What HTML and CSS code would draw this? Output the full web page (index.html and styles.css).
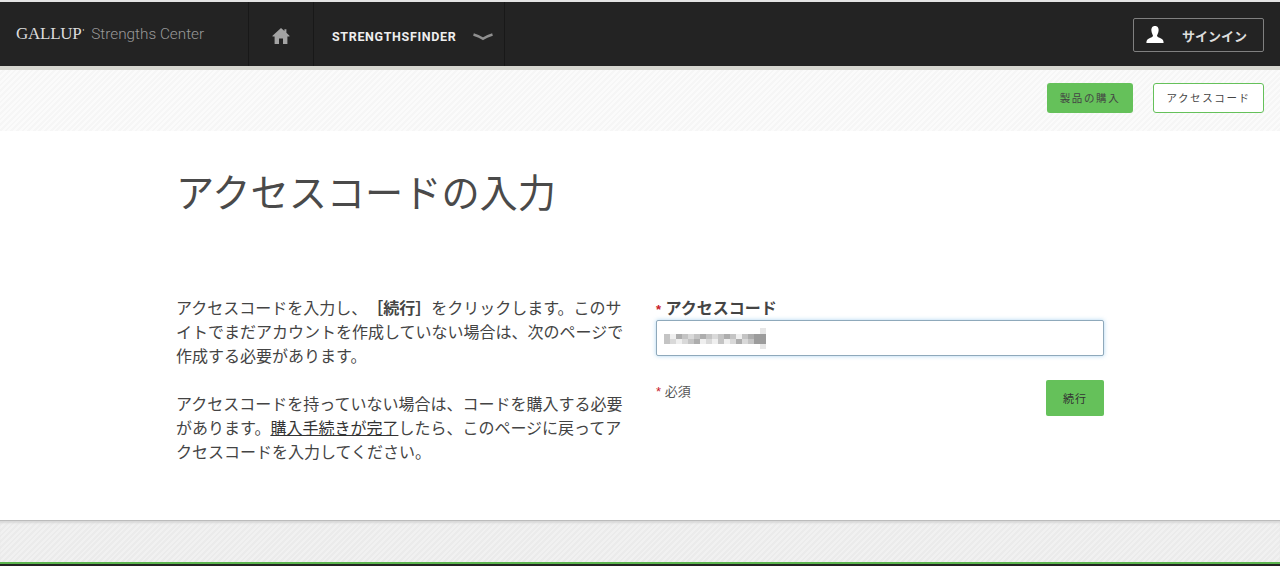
FILE: index.html
```html
<!DOCTYPE html>
<html lang="ja">
<head>
<meta charset="utf-8">
<title>アクセスコードの入力</title>
<link rel="stylesheet" href="styles.css">
</head>
<body>
<header class="topbar">
  <div class="brand"><span class="gallup">GALLUP</span><span class="tm">'</span><span class="center">Strengths Center</span></div>
  <a class="nav-home" aria-label="home">
    <svg width="18" height="18" viewBox="0 0 18 18"><path fill="#a3a3a3" d="M9 1 L12.4 4 V2.2 H14.4 V5.8 L17.5 8.7 V9.6 H15.4 V17 H11 V11.5 H7 V17 H2.6 V9.6 H.5 V8.7 Z"/></svg>
  </a>
  <a class="nav-menu"><span>STRENGTHSFINDER</span>
    <svg class="chev" width="20" height="8" viewBox="0 0 20 8"><path fill="none" stroke="#8f8f8f" stroke-width="2.4" d="M0.5 1.5 Q7 3.5 10 5.8 Q13 3.5 19.5 1.5"/></svg>
  </a>
  <a class="signin">
    <svg width="18" height="18" viewBox="0 0 18 18"><path fill="#fff" d="M9 0 C12 0 12.8 2.4 12.6 4.6 C12.4 7 11.4 8.6 11 9.6 C11 11 13 11.6 15 12.4 C17 13.2 17.6 14.4 17.6 17 H.4 C.4 14.4 1 13.2 3 12.4 C5 11.6 7 11 7 9.6 C6.6 8.6 5.6 7 5.4 4.6 C5.2 2.4 6 0 9 0 Z"/></svg>
    <span>サインイン</span>
  </a>
</header>
<div class="subbar">
  <a class="btn btn-green">製品の購入</a>
  <a class="btn btn-outline">アクセスコード</a>
</div>
<main class="content">
  <h1>アクセスコードの入力</h1>
  <div class="columns">
    <div class="intro">
      <p>アクセスコードを入力し、<b>［続行］</b>をクリックします。このサイトでまだアカウントを作成していない場合は、次のページで作成する必要があります。</p>
      <p>アクセスコードを持っていない場合は、コードを購入する必要があります。<a class="link">購入手続きが完了</a>したら、このページに戻ってアクセスコードを入力してください。</p>
    </div>
    <form class="form">
      <label class="field-label"><span class="star">*</span> アクセスコード</label>
      <div class="input">
        <svg class="masked" width="102" height="21" viewBox="0 0 102 21" shape-rendering="crispEdges">
          <path fill="#d9d9d9" d="M0 6h96v5H0zM0 11h96v5H0z"/>
          <path fill="#efefef" d="M6 6h6v5H6zM36 11h6v5h-6zM60 11h6v5h-6zM72 6h6v5h-6zM48 11h6v5h-6zM12 11h6v5h-6z"/>
          <path fill="#c4c4c4" d="M0 6h6v5H0zM18 6h6v5h-6zM30 6h6v5h-6zM42 6h6v5h-6zM54 6h6v5h-6zM66 6h6v5h-6zM78 6h6v5h-6zM0 11h6v5H0zM24 11h6v5h-6zM54 11h6v5h-6zM84 11h6v5h-6z"/>
          <path fill="#adadad" d="M12 6h6v5h-6zM36 6h6v5h-6zM60 6h6v5h-6zM84 6h6v5h-6zM30 11h6v5h-6zM72 11h6v5h-6z"/>
          <path fill="#9c9c9c" d="M90 6h12v10H90z"/>
          <path fill="#e6e6e6" d="M96 0h6v6h-6zM96 16h6v5h-6z"/>
        </svg>
      </div>
      <div class="form-foot">
        <span class="required"><span class="star">*</span> 必須</span>
        <button class="submit" type="button">続行</button>
      </div>
    </form>
  </div>
</main>
<footer class="footer"></footer>
</body>
</html>
```
FILE: styles.css
```css
* { box-sizing: border-box; }
html, body { margin: 0; height: 566px; overflow: hidden; }
body {
  font-family: "Liberation Sans", "Noto Sans CJK JP", sans-serif;
  color: #444;
  background: #fff;
  display: flex;
  flex-direction: column;
}
.topbar {
  height: 70px;
  flex: none;
  display: flex;
  align-items: stretch;
  background: #232323;
  border-top: 2px solid #e4e4e4;
  border-bottom: 4px solid #d6d6d0;
}
.brand {
  width: 249px;
  display: flex;
  align-items: baseline;
  padding: 22px 0 0 16px;
  border-right: 1px solid #181818;
  white-space: nowrap;
}
.gallup {
  font-family: "Liberation Serif", serif;
  font-size: 17px;
  letter-spacing: -0.25px;
  color: #dcdcdc;
}
.tm { align-self: flex-start; font-size: 9px; line-height: 10px; color: #ccc; margin: 3px 7px 0 1px; }
.center {
  font-family: "Roboto", sans-serif;
  font-weight: 300;
  font-size: 15.3px;
  color: #999;
}
.nav-home {
  width: 65px;
  display: flex;
  align-items: center;
  justify-content: center;
  padding: 4px 0 0 0;
  border-right: 1px solid #181818;
}
.nav-menu {
  width: 191px;
  display: flex;
  align-items: center;
  justify-content: space-between;
  padding: 4px 11px 0 18px;
  border-right: 1px solid #181818;
  font-family: "Roboto", sans-serif;
  font-weight: 700;
  font-size: 12.5px;
  letter-spacing: 0.65px;
  color: #eee;
}
.chev { margin-top: 2px; }
.signin {
  margin: 16px 16px 0 auto;
  width: 131px;
  height: 34px;
  display: flex;
  align-items: center;
  gap: 18px;
  padding-left: 12px;
  border: 1px solid #808080;
  border-radius: 2px;
  font-size: 13px;
  font-weight: 700;
  color: #ddd;
}
.subbar {
  height: 61px;
  flex: none;
  display: flex;
  justify-content: flex-end;
  gap: 20px;
  padding: 13px 16px 0 0;
  background: repeating-linear-gradient(135deg, #fbfbfb 0 2px, #f6f6f6 2px 4px);
}
.btn {
  height: 30px;
  display: flex;
  align-items: center;
  justify-content: center;
  padding-bottom: 1px;
  border-radius: 3px;
  font-size: 10.5px;
  letter-spacing: 1.6px;
  color: #444;
}
.btn-green { width: 86px; background: #65c15a; }
.btn-outline { width: 111px; background: #fff; border: 1px solid #65c15a; }
.content {
  flex: 1;
  padding: 0 176px;
}
h1 {
  margin: 40px 0 0;
  height: 46px;
  font-size: 38.2px;
  line-height: 46px;
  font-weight: 400;
  color: #4a4a4a;
  white-space: nowrap;
}
.columns {
  display: flex;
  gap: 32px;
  margin-top: 80px;
}
.intro {
  width: 448px;
  font-size: 16px;
  line-height: 24px;
  text-spacing-trim: space-all;
}
.intro p { margin: 0 0 24px; }
.intro b { font-weight: 700; }
.link { color: #333; text-decoration: underline; }
.form { width: 448px; }
.field-label {
  display: block;
  height: 22px;
  font-size: 16px;
  line-height: 22px;
  font-weight: 700;
  color: #444;
  margin-top: 1px;
}
.star { color: #c8202a; font-size: 13px; }
.input {
  height: 36px;
  display: flex;
  align-items: center;
  padding-left: 7px;
  background: #fff;
  border: 1px solid #8fa9bb;
  border-radius: 2px;
  box-shadow: 0 0 4px rgba(120, 185, 230, 0.6);
}
.masked { display: block; filter: blur(0.6px); }
.form-foot {
  display: flex;
  justify-content: space-between;
  align-items: flex-start;
  margin-top: 24px;
}
.required { font-size: 13px; line-height: 24px; color: #555; }
.submit {
  width: 58px;
  height: 36px;
  padding: 0;
  border: 0;
  border-radius: 2px;
  background: #65c15a;
  font-family: inherit;
  font-size: 11px;
  letter-spacing: 1px;
  color: #333;
}
.footer {
  height: 46px;
  flex: none;
  background: repeating-linear-gradient(135deg, #f1f1f1 0 2px, #ebebeb 2px 4px);
  border-top: 1px solid #bcbcbc;
  border-bottom: 2px solid #232323;
  box-shadow: inset 0 -2px 0 #5cb54f, inset 0 3px 2px -1px #d8d8d8;
}
```
